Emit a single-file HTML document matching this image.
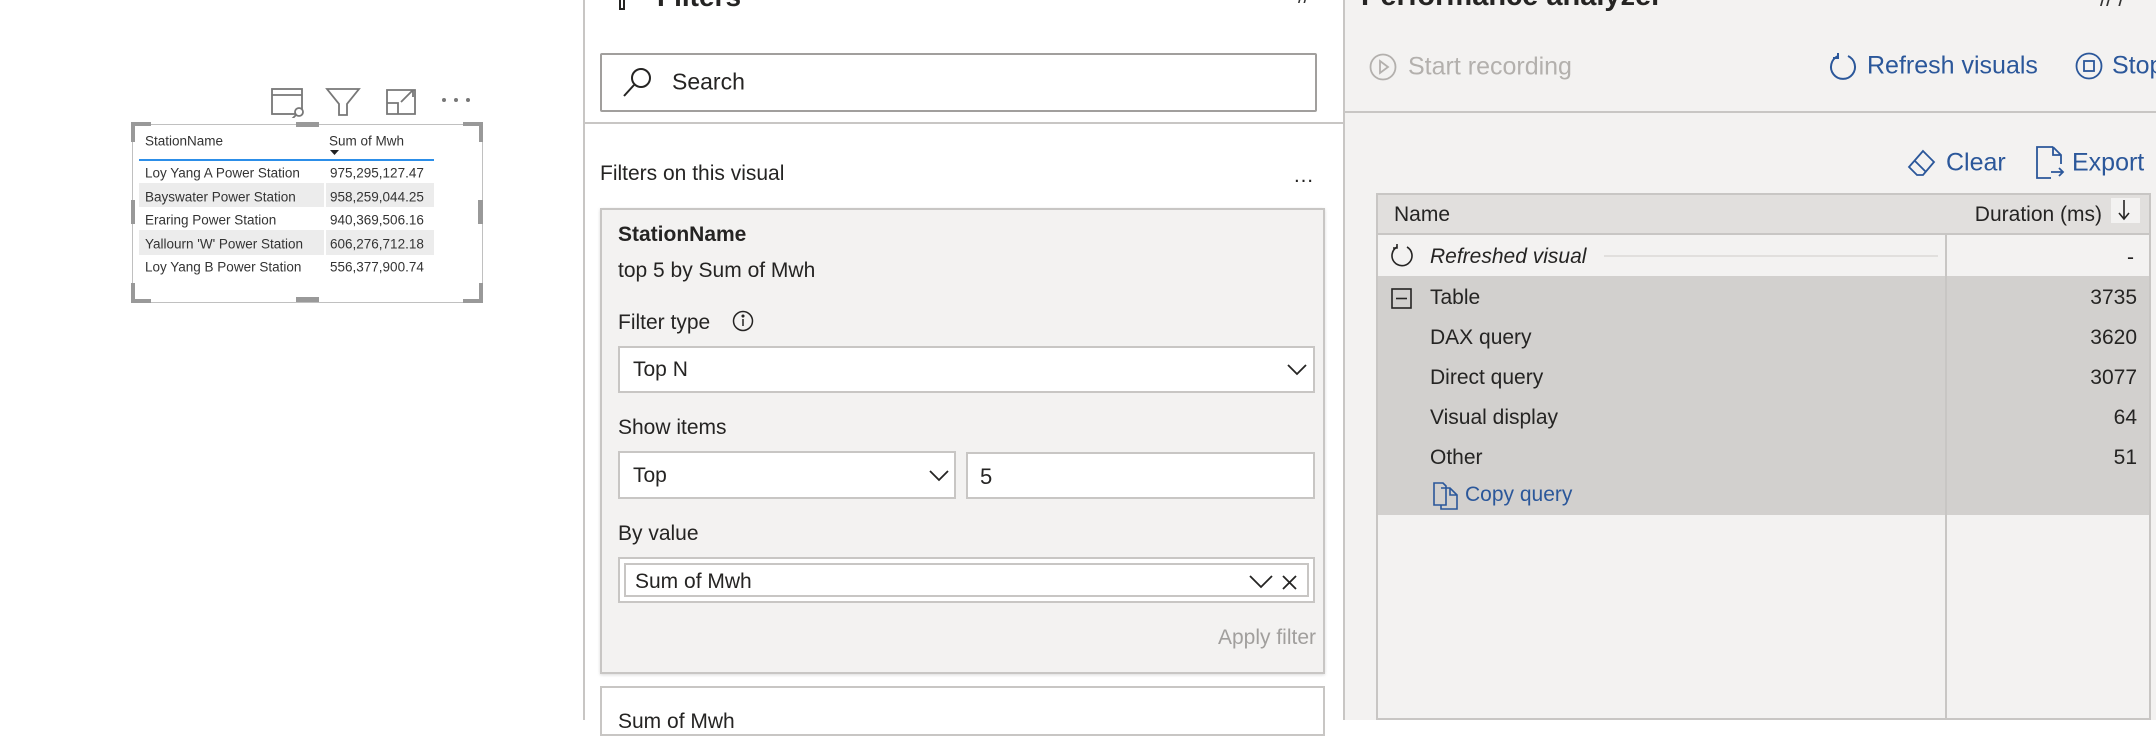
<!DOCTYPE html>
<html><head><meta charset="utf-8"><style>
*{margin:0;padding:0;box-sizing:border-box}
body{width:2156px;height:720px;overflow:hidden;background:#fff;font-family:"Liberation Sans",sans-serif;color:#252423;position:relative}
.a{position:absolute;white-space:nowrap}
.tbl div{position:absolute;font-size:13.5px;color:#333;transform:translateY(-50%)}
.box{position:absolute;background:#fff;border:2px solid #c8c6c4}
.lbl{position:absolute;font-size:21px;transform:translateY(-50%)}
</style></head><body>

<!-- visual -->
<svg class="a" style="left:270px;top:86px" width="205" height="32" viewBox="0 0 205 32" fill="none" stroke="#777" stroke-width="1.8">
<rect x="2" y="3" width="30" height="25"/><line x1="2" y1="9" x2="32" y2="9"/><circle cx="29" cy="26" r="4" fill="#fff"/><line x1="26" y1="29" x2="22" y2="33"/>
<path d="M57 3h32l-12 15v11h-8V18z"/>
<path d="M117 28V4h28v24zM117 17h11v11M131 16l12-12M136 4h7v7"/>
<circle cx="174" cy="14" r="2" fill="#777" stroke="none"/><circle cx="186" cy="14" r="2" fill="#777" stroke="none"/><circle cx="198" cy="14" r="2" fill="#777" stroke="none"/>
</svg>
<div class="a" style="left:132px;top:124px;width:351px;height:179px;border:1.5px solid #c0c0c0"></div>
<div class="a" style="left:131px;top:122px;width:20px;height:4px;background:#999"></div><div class="a" style="left:131px;top:122px;width:4px;height:20px;background:#999"></div>
<div class="a" style="left:463px;top:122px;width:20px;height:4px;background:#999"></div><div class="a" style="left:479px;top:122px;width:4px;height:20px;background:#999"></div>
<div class="a" style="left:131px;top:299px;width:20px;height:4px;background:#999"></div><div class="a" style="left:131px;top:283px;width:4px;height:20px;background:#999"></div>
<div class="a" style="left:463px;top:299px;width:20px;height:4px;background:#999"></div><div class="a" style="left:479px;top:283px;width:4px;height:20px;background:#999"></div>
<div class="a" style="left:296px;top:122px;width:23px;height:5px;background:#999"></div><div class="a" style="left:296px;top:297px;width:23px;height:5px;background:#999"></div>
<div class="a" style="left:131px;top:200px;width:4px;height:24px;background:#999"></div><div class="a" style="left:478px;top:200px;width:5px;height:24px;background:#999"></div>
<div class="a" style="left:139px;top:183px;width:185px;height:24px;background:#ececec"></div><div class="a" style="left:326px;top:183px;width:108px;height:24px;background:#ececec"></div>
<div class="a" style="left:139px;top:230px;width:185px;height:25px;background:#ececec"></div><div class="a" style="left:326px;top:230px;width:108px;height:25px;background:#ececec"></div>
<div class="a" style="left:139px;top:159px;width:295px;height:2px;background:#2c8ee8"></div>
<svg class="a" style="left:330px;top:150px" width="10" height="6"><path d="M0 0h9L4.5 5z" fill="#222"/></svg>
<div class="tbl">
<div style="left:145px;top:141px">StationName</div><div style="left:329px;top:141px">Sum of Mwh</div>
<div style="left:145px;top:173px">Loy Yang A Power Station</div><div style="left:330px;top:173px">975,295,127.47</div>
<div style="left:145px;top:197px">Bayswater Power Station</div><div style="left:330px;top:197px">958,259,044.25</div>
<div style="left:145px;top:220px">Eraring Power Station</div><div style="left:330px;top:220px">940,369,506.16</div>
<div style="left:145px;top:244px">Yallourn 'W' Power Station</div><div style="left:330px;top:244px">606,276,712.18</div>
<div style="left:145px;top:267px">Loy Yang B Power Station</div><div style="left:330px;top:267px">556,377,900.74</div>
</div>

<!-- filters pane -->
<div class="a" style="left:583px;top:0;width:2px;height:720px;background:#c8c6c4"></div>
<div class="a" style="left:585px;top:122px;width:758px;height:2px;background:#c8c6c4"></div>
<div class="a" style="left:619px;top:-4px;width:6px;height:14px;border:2px solid #252423;border-top:none"></div>
<div class="a" style="left:657px;top:-19px;font-size:28px;font-weight:bold">Filters</div>
<div class="a" style="left:1298px;top:-14px;font-size:20px;color:#333">//</div>
<div class="a" style="left:600px;top:53px;width:717px;height:59px;border:2px solid #a19f9d;border-radius:2px"></div>
<svg class="a" style="left:621px;top:66px" width="34" height="32" fill="none" stroke="#252423" stroke-width="2"><circle cx="20" cy="12" r="9"/><line x1="13" y1="19" x2="3" y2="30"/></svg>
<div class="lbl" style="left:672px;top:82px;font-size:23px">Search</div>
<div class="lbl" style="left:600px;top:174px">Filters on this visual</div>
<div class="lbl" style="left:1293px;top:176px">…</div>
<div class="a" style="left:600px;top:208px;width:725px;height:466px;background:#f3f2f1;border:2px solid #c8c6c4;box-shadow:0 1px 3px rgba(0,0,0,.15)"></div>
<div class="lbl" style="left:618px;top:235px;font-weight:bold">StationName</div>
<div class="lbl" style="left:618px;top:271px">top 5 by Sum of Mwh</div>
<div class="lbl" style="left:618px;top:323px">Filter type</div>
<svg class="a" style="left:732px;top:310px" width="22" height="22" fill="none" stroke="#252423" stroke-width="1.5"><circle cx="11" cy="11" r="9.5"/><line x1="11" y1="9" x2="11" y2="16"/><circle cx="11" cy="6" r=".8" fill="#252423"/></svg>
<div class="box" style="left:618px;top:346px;width:697px;height:47px"></div>
<div class="lbl" style="left:633px;top:370px">Top N</div>
<svg class="a" style="left:1287px;top:364px" width="20" height="12" fill="none" stroke="#252423" stroke-width="1.8"><path d="M1 1l9 9 9-9"/></svg>
<div class="lbl" style="left:618px;top:428px">Show items</div>
<div class="box" style="left:618px;top:451px;width:338px;height:48px"></div>
<div class="lbl" style="left:633px;top:476px">Top</div>
<svg class="a" style="left:929px;top:470px" width="20" height="12" fill="none" stroke="#252423" stroke-width="1.8"><path d="M1 1l9 9 9-9"/></svg>
<div class="box" style="left:966px;top:452px;width:349px;height:47px"></div>
<div class="lbl" style="left:980px;top:477px;font-size:22px">5</div>
<div class="lbl" style="left:618px;top:534px">By value</div>
<div class="box" style="left:618px;top:557px;width:697px;height:46px"></div>
<div class="a" style="left:624px;top:563px;width:685px;height:34px;border:2px solid #c8c6c4"></div>
<div class="lbl" style="left:635px;top:582px">Sum of Mwh</div>
<svg class="a" style="left:1249px;top:574px" width="52" height="16" fill="none" stroke="#252423" stroke-width="1.8"><path d="M1 2l11 11 11-11M34 2l13 13M47 2L34 15"/></svg>
<div class="lbl" style="right:840px;top:638px;color:#a19f9d">Apply filter</div>
<div class="a" style="left:600px;top:686px;width:725px;height:50px;background:#fff;border:2px solid #c8c6c4"></div>
<div class="lbl" style="left:618px;top:722px">Sum of Mwh</div>

<!-- performance analyzer -->
<div class="a" style="left:1343px;top:0;width:813px;height:720px;background:#f3f2f1;border-left:2px solid #c8c6c4"></div>
<div class="a" style="left:1361px;top:-20px;font-size:29px;font-weight:bold">Performance analyzer</div>
<div class="a" style="left:2100px;top:-14px;font-size:22px;color:#333">// /</div>
<svg class="a" style="left:1369px;top:53px" width="28" height="28" fill="none" stroke="#b3b0ad" stroke-width="1.8"><circle cx="14" cy="14" r="12.5"/><path d="M11 8l8 6-8 6z"/></svg>
<div class="lbl" style="left:1408px;top:67px;font-size:25px;color:#b3b0ad">Start recording</div>
<svg class="a" style="left:1828px;top:52px" width="30" height="30" fill="none" stroke="#2b579a" stroke-width="2"><path d="M10 4A12 12 0 1 0 20 4"/><path d="M10 1v5H5"/></svg>
<div class="lbl" style="left:1867px;top:66px;font-size:25px;color:#2b579a">Refresh visuals</div>
<svg class="a" style="left:2075px;top:52px" width="28" height="28" fill="none" stroke="#2b579a" stroke-width="1.8"><circle cx="14" cy="14" r="12.5"/><rect x="9" y="9" width="10" height="10"/></svg>
<div class="lbl" style="left:2112px;top:66px;font-size:25px;color:#2b579a">Stop</div>
<div class="a" style="left:1345px;top:111px;width:811px;height:2px;background:#c8c6c4"></div>
<svg class="a" style="left:1906px;top:148px" width="30" height="30" fill="none" stroke="#2b579a" stroke-width="1.8"><path d="M17 3l11 11-11 13H11L3 19z M9 13l11 11"/></svg>
<div class="lbl" style="left:1946px;top:163px;font-size:25px;color:#2b579a">Clear</div>
<svg class="a" style="left:2035px;top:146px" width="30" height="34" fill="none" stroke="#2b579a" stroke-width="1.8"><path d="M18 1H2v31h14M18 1l8 8v9M18 1v8h8M16 26h12M24 22l4 4-4 4"/></svg>
<div class="lbl" style="left:2072px;top:163px;font-size:25px;color:#2b579a">Export</div>
<div class="a" style="left:1376px;top:193px;width:775px;height:527px;border:2px solid #c8c6c4;background:#f3f2f1"></div>
<div class="a" style="left:1378px;top:195px;width:771px;height:40px;background:#e1dfdd;border-bottom:2px solid #c8c6c4"></div>
<div class="lbl" style="left:1394px;top:215px">Name</div>
<div class="lbl" style="right:54px;top:215px">Duration (ms)</div>
<div class="a" style="left:2111px;top:198px;width:29px;height:25px;background:#f3f2f1"></div>
<svg class="a" style="left:2117px;top:199px" width="14" height="22" fill="none" stroke="#252423" stroke-width="1.6"><path d="M7 1v19M2 14l5 6 5-6"/></svg>
<div class="a" style="left:1378px;top:276px;width:771px;height:239px;background:#d2d0ce"></div>
<div class="a" style="left:1945px;top:235px;width:2px;height:485px;background:#c8c6c4"></div>
<svg class="a" style="left:1389px;top:243px" width="26" height="26" fill="none" stroke="#252423" stroke-width="1.6"><path d="M8 4A10 10 0 1 0 18 4"/><path d="M8 1v4H4"/></svg>
<div class="lbl" style="left:1430px;top:257px;font-style:italic">Refreshed visual</div>
<div class="a" style="left:1604px;top:255px;width:334px;height:2px;background:#e1dfdd"></div>
<div class="lbl" style="right:22px;top:258px">-</div>
<svg class="a" style="left:1391px;top:288px" width="21" height="21" fill="none" stroke="#252423" stroke-width="1.6"><rect x="1" y="1" width="19" height="19"/><line x1="5" y1="10.5" x2="16" y2="10.5"/></svg>
<div class="lbl" style="left:1430px;top:298px">Table</div><div class="lbl" style="right:19px;top:298px">3735</div>
<div class="lbl" style="left:1430px;top:338px">DAX query</div><div class="lbl" style="right:19px;top:338px">3620</div>
<div class="lbl" style="left:1430px;top:378px">Direct query</div><div class="lbl" style="right:19px;top:378px">3077</div>
<div class="lbl" style="left:1430px;top:418px">Visual display</div><div class="lbl" style="right:19px;top:418px">64</div>
<div class="lbl" style="left:1430px;top:458px">Other</div><div class="lbl" style="right:19px;top:458px">51</div>
<svg class="a" style="left:1432px;top:482px" width="28" height="28" fill="none" stroke="#2b579a" stroke-width="1.6"><path d="M2 1h9l3 3v19H2zM9 6h9l7 7v14H9v-4M18 6v7h7"/></svg>
<div class="lbl" style="left:1465px;top:495px;color:#2b579a">Copy query</div>
</body></html>
